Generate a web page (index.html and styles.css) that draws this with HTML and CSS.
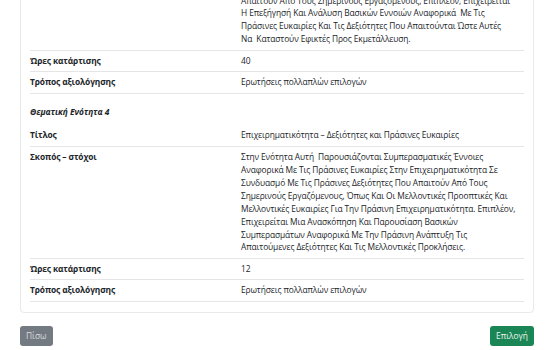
FILE: index.html
```html
<!DOCTYPE html>
<html lang="el">
<head>
<meta charset="utf-8">
<title>Θεματικές Ενότητες</title>
<link rel="stylesheet" href="styles.css">
</head>
<body>
<main class="page">
  <section class="card">
    <table class="details">
      <tbody>
        <tr>
          <th>Σκοπός – στόχοι</th>
          <td class="text">Στην Ενότητα Αυτή Παρουσιάζονται Οι Πράσινες Δεξιότητες
Και Οι Νέες Επαγγελματικές Απαιτήσεις Που Οι Επιχειρήσεις
Απαιτούν Από Τους Σημερινούς Εργαζόμενους, Επιπλέον, Επιχειρείται
Η Επεξήγησή Και Ανάλυση Βασικών Εννοιών Αναφορικά&nbsp; Με Τις
Πράσινες Ευκαιρίες Και Τις Δεξιότητες Που Απαιτούνται Ώστε Αυτές
Να&nbsp; Καταστούν Εφικτές Προς Εκμετάλλευση.</td>
        </tr>
        <tr>
          <th>Ώρες κατάρτισης</th>
          <td>40</td>
        </tr>
        <tr>
          <th>Τρόπος αξιολόγησης</th>
          <td>Ερωτήσεις πολλαπλών επιλογών</td>
        </tr>
      </tbody>
      <tbody>
        <tr class="section">
          <th colspan="2"><em>Θεματική Ενότητα 4</em></th>
        </tr>
        <tr class="title">
          <th>Τίτλος</th>
          <td>Επιχειρηματικότητα – Δεξιότητες και Πράσινες Ευκαιρίες</td>
        </tr>
        <tr>
          <th>Σκοπός – στόχοι</th>
          <td class="text">Στην Ενότητα Αυτή&nbsp; Παρουσιάζονται Συμπερασματικές Έννοιες
Αναφορικά Με Τις Πράσινες Ευκαιρίες Στην Επιχειρηματικότητα Σε
Συνδυασμό Με Τις Πράσινες Δεξιότητες Που Απαιτούν Από Τους
Σημερινούς Εργαζόμενους, Όπως Και Οι Μελλοντικές Προοπτικές Και
Μελλοντικές Ευκαιρίες Για Την Πράσινη Επιχειρηματικότητα. Επιπλέον,
Επιχειρείται Μια Ανασκόπηση Και Παρουσίαση Βασικών
Συμπερασμάτων Αναφορικά Με Την Πράσινη Ανάπτυξη Τις
Απαιτούμενες Δεξιότητες Και Τις Μελλοντικές Προκλήσεις.</td>
        </tr>
        <tr>
          <th>Ώρες κατάρτισης</th>
          <td>12</td>
        </tr>
        <tr>
          <th>Τρόπος αξιολόγησης</th>
          <td>Ερωτήσεις πολλαπλών επιλογών</td>
        </tr>
      </tbody>
    </table>
  </section>
  <nav class="actions">
    <button type="button" class="btn btn-back">Πίσω</button>
    <button type="button" class="btn btn-select">Επιλογή</button>
  </nav>
</main>
</body>
</html>
```

FILE: styles.css
```css
html,
body {
  margin: 0;
  background: #fff;
}

body {
  font-family: "Open Sans", "Noto Sans", sans-serif;
  font-size: 8.4px;
  letter-spacing: -0.1px;
  color: #212529;
  height: 350px;
  overflow: hidden;
}

.page {
  padding: 0 20px;
}

/* card scrolled partly out of view at the top */
.card {
  margin-top: -46px;
  background: #fff;
  border: 1px solid #e7e9eb;
  border-radius: 4px;
  padding: 10px 9px 10px;
}

.details {
  width: 100%;
  border-collapse: collapse;
}

.details th,
.details td {
  padding: 3.75px 0;
  line-height: 12.9px;
  text-align: left;
  vertical-align: top;
  border-bottom: 1px solid #e3e5e7;
}

.details th {
  width: 211px;
  font-weight: 700;
}

.details td {
  padding-right: 4px;
  font-weight: 400;
}

/* stored descriptions keep their own line breaks */
.details .text {
  white-space: pre-line;
}

.details .section th {
  padding: 12.5px 0 6px;
  border-bottom: 0;
}

.details .section em {
  font-style: italic;
  font-weight: 700;
  letter-spacing: 0;
}

.details .title th,
.details .title td {
  padding-bottom: 4.5px;
}

.actions {
  display: flex;
  justify-content: space-between;
  margin-top: 13px;
}

.btn {
  height: 20px;
  padding: 0 6px;
  border: 0;
  border-radius: 3px;
  font-family: "Open Sans", "Noto Sans", sans-serif;
  font-size: 8.4px;
  line-height: 20px;
}

.btn-back {
  background: #737a81;
  color: #d9dcdf;
}

.btn-select {
  background: #1a8656;
  color: #eef6f1;
}
```
